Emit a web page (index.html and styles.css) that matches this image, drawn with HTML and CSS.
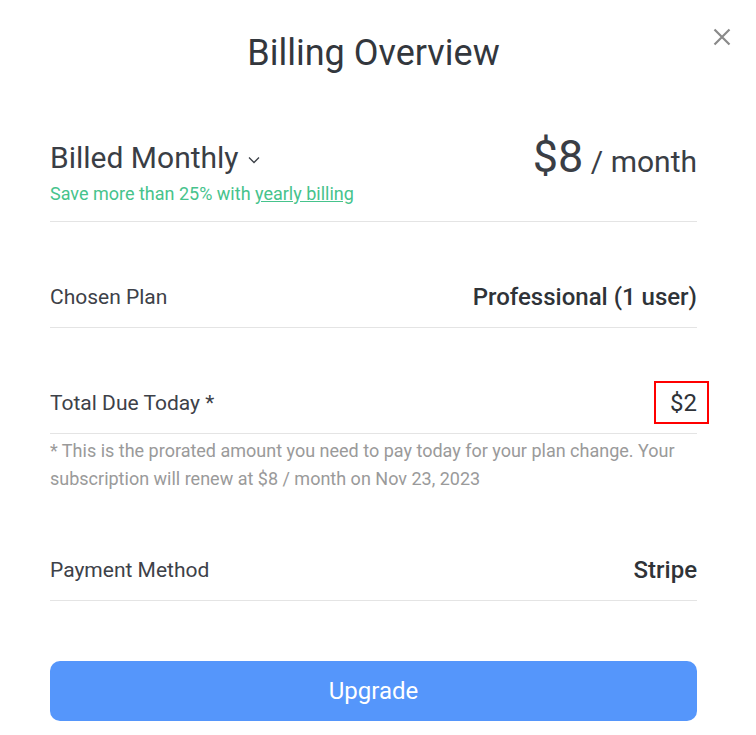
FILE: index.html
```html
<!DOCTYPE html>
<html lang="en">
<head>
    <meta charset="UTF-8">
    <meta name="viewport" content="width=device-width, initial-scale=1.0">
    <title>Billing Overview</title>
    <link rel="stylesheet" href="styles.css">
</head>
<body>
    <div class="modal">
        <button class="close" aria-label="Close">
            <svg width="20" height="20" viewBox="0 0 20 20">
                <path d="M2.5 2.5 L17.5 17.5 M17.5 2.5 L2.5 17.5" stroke="#8a8a8a" stroke-width="2.2" fill="none"/>
            </svg>
        </button>
        <h1>Billing Overview</h1>

        <div class="billing">
            <div class="period">
                <div class="period-name">Billed Monthly
                    <svg class="caret" width="12" height="8" viewBox="0 0 12 8">
                        <path d="M1 1.5 L6 6.5 L11 1.5" stroke="#3d4148" stroke-width="1.3" fill="none"/>
                    </svg>
                </div>
                <div class="save">Save more than 25% with <a href="#">yearly billing</a></div>
            </div>
            <div class="price"><span class="amount">$8</span> / month</div>
        </div>

        <div class="row">
            <span class="label">Chosen Plan</span>
            <span class="value">Professional (1 user)</span>
        </div>

        <div class="row">
            <span class="label">Total Due Today *</span>
            <span class="value marked">$2</span>
        </div>
        <p class="note">* This is the prorated amount you need to pay today for your plan change. Your subscription will renew at $8 / month on Nov 23, 2023</p>

        <div class="row">
            <span class="label">Payment Method</span>
            <span class="value">Stripe</span>
        </div>

        <button class="upgrade">Upgrade</button>
    </div>
</body>
</html>
```
FILE: styles.css
```css
body {
    font-family: Roboto, "Noto Sans", sans-serif;
    background: #fff;
    margin: 0;
    padding: 0;
}
.modal {
    position: relative;
    width: 647px;
    padding: 29px 59px 0 50px;
}
.close {
    position: absolute;
    top: 27px;
    right: 24px;
    background: none;
    border: none;
    padding: 0;
    cursor: pointer;
}
h1 {
    margin: 0;
    font-size: 36px;
    font-weight: 400;
    line-height: 48px;
    color: #33373d;
    text-align: center;
}
.billing {
    display: flex;
    justify-content: space-between;
    align-items: flex-start;
    padding: 61px 0 16px;
    border-bottom: 1px solid #e4e4e4;
}
.period-name {
    font-size: 30px;
    line-height: 40px;
    color: #3a3e45;
}
.caret {
    margin-left: 2px;
    vertical-align: middle;
}
.save {
    margin-top: 5px;
    font-size: 18px;
    line-height: 22px;
    color: #46c38c;
}
.save a {
    color: #46c38c;
}
.price {
    font-size: 30px;
    color: #3a3e45;
    line-height: 44px;
    margin-top: -3px;
}
.amount {
    font-size: 45px;
}
.row {
    display: flex;
    justify-content: space-between;
    align-items: center;
    padding: 63px 0 18px;
    border-bottom: 1px solid #e4e4e4;
    line-height: 24px;
}
.label {
    font-size: 21px;
    color: #3d4148;
}
.value {
    font-size: 24px;
    font-weight: 500;
    color: #2f3338;
}
.marked {
    position: relative;
    display: inline-block;
    font-weight: 400;
}
.marked::after {
    content: "";
    position: absolute;
    top: -10px;
    bottom: -9px;
    left: -16px;
    right: -12px;
    border: 2px solid #f00;
}
.note {
    margin: 3px 0 0;
    font-size: 18px;
    line-height: 28px;
    color: #9a9a9a;
}
.note + .row {
    padding-top: 65px;
}
.upgrade {
    display: block;
    width: 100%;
    height: 60px;
    margin-top: 60px;
    background: #5596fb;
    color: #fff;
    border: none;
    border-radius: 10px;
    font-family: inherit;
    font-size: 24px;
    cursor: pointer;
}
```
